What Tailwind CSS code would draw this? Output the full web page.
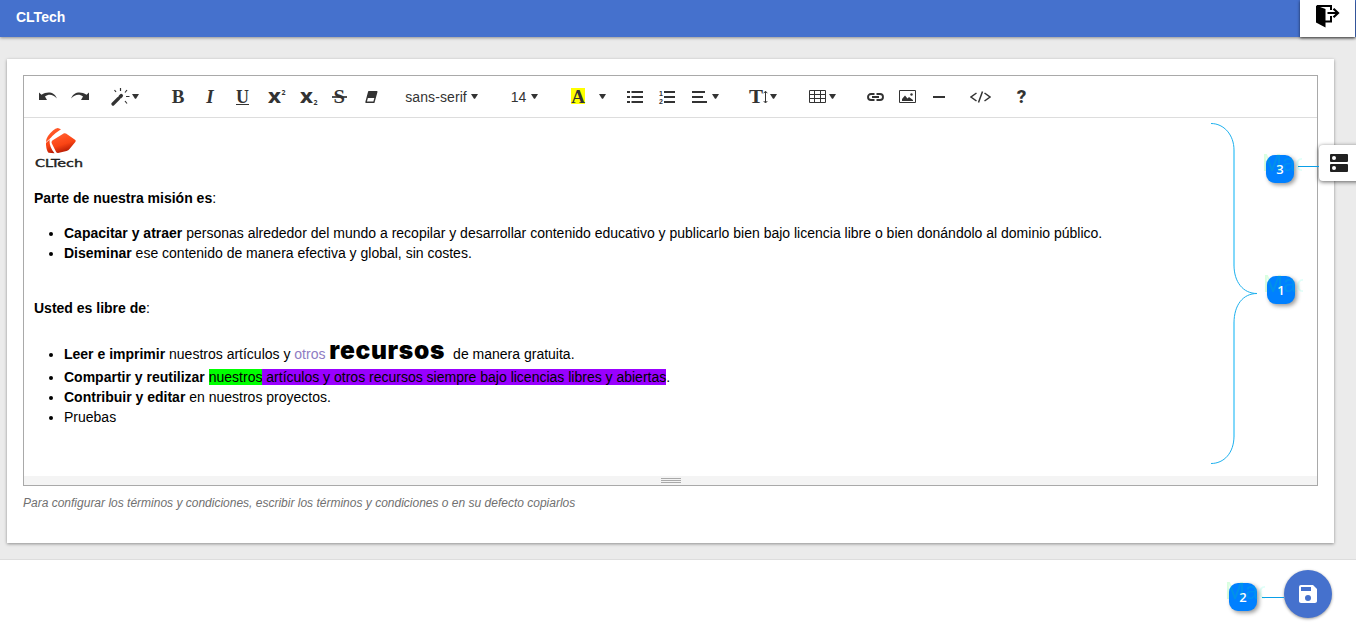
<!DOCTYPE html>
<html lang="es">
<head>
<meta charset="utf-8">
<title>CLTech</title>
<script src="https://cdn.jsdelivr.net/npm/@tailwindcss/browser@4"></script>
</head>
<body class="relative h-[640px] w-[1356px] overflow-hidden bg-[#ebebeb] font-['Liberation_Sans',Arial,sans-serif] text-sm leading-5 text-black">
<svg class="hidden"><symbol id="caret" viewBox="0 0 7 5"><path d="M0 0h7L4 4.7H3z" fill="#333"/></symbol></svg>

<header class="flex h-[37px] justify-between bg-[#4571cd] shadow-[0_1px_3px_rgba(0,0,0,.4)]">
  <h1 class="pl-4 pt-[7px] text-sm leading-5 font-bold text-white">CLTech</h1>
  <button class="mr-px flex h-[37px] w-[55px] justify-center bg-white pt-1 shadow-[0_1px_3px_rgba(0,0,0,.65)]" aria-label="Salir">
    <svg width="24" height="24" viewBox="0 0 24 24"><path d="M0 1.500 9.500 5v18.500L0 18.500z"/><path d="M1 2h14V6M15 12v5.500H9" fill="none" stroke="#000" stroke-width="2"/><path d="M11.500 9h10M17.500 4.700 22 9 17.500 13.300" fill="none" stroke="#000" stroke-width="2.200"/></svg>
  </button>
</header>

<main class="ml-[7px] mt-[22px] h-[484px] w-[1327px] bg-white px-4 pt-4 shadow-[0_1px_3px_rgba(0,0,0,.4)]">
  <section class="flex h-[411px] w-[1295px] flex-col border border-[#a9a9a9]">
    <div class="flex h-[42px] shrink-0 items-center border-b border-[#ddd] pl-[7px] text-[#333]">
      <div class="flex w-[33px] justify-center"><svg width="18" height="9" viewBox="0 0 18 9"><path d="M0 .5 2.500 2.800C8-1 15.500-.5 17.800 6.500 14 2 9.500 1.800 6 4.500L8 8H0z" fill="#333"/></svg></div>
      <div class="flex w-8 justify-center"><svg width="18" height="9" viewBox="0 0 18 9"><path d="M18 .5 15.500 2.800C10-1 2.500-.5 .2 6.500 4 2 8.500 1.800 12 4.500L10 8h8z" fill="#333"/></svg></div>
      <div class="flex w-[58px] items-center justify-center gap-[2px]"><svg width="19" height="18" viewBox="0 0 19 18"><path d="M2 16 7.500 10.500" stroke="#333" stroke-width="3.200" stroke-linecap="round"/><path d="M9.200 8.700l1-1" stroke="#333" stroke-width="3.600" stroke-linecap="round"/><path d="M9.500 0V3M3.500 2 5 4M16 2 14 4.500M15 8.500h3.500M14 13l2 2.500" stroke="#333" stroke-width="1.200"/></svg><svg class="h-[5px] w-[7px]"><use href="#caret"/></svg></div>
      <div class="ml-2 flex w-8 justify-center font-['Liberation_Serif',serif] text-[19px] font-bold">B</div>
      <div class="flex w-8 justify-center font-['Liberation_Serif',serif] text-[19px] font-bold italic">I</div>
      <div class="flex w-[33px] justify-center"><span class="mt-px h-[15px] border-b border-[#333] font-['Liberation_Serif',serif] text-[18px] leading-[14px] font-bold">U</span></div>
      <div class="ml-[2px] flex w-8 justify-center"><svg class="overflow-visible" width="18" height="17" viewBox="0 0 18 17"><text x="0" y="15" font-family="Open Sans, sans-serif" font-size="16.500" font-weight="800" textLength="13" lengthAdjust="spacingAndGlyphs" fill="#333">X</text><text x="13.500" y="7" font-family="Noto Sans, sans-serif" font-size="7" font-weight="700" fill="#333">2</text></svg></div>
      <div class="flex w-8 justify-center"><svg class="overflow-visible" width="18" height="17" viewBox="0 0 18 17"><text x="0" y="15" font-family="Open Sans, sans-serif" font-size="16.500" font-weight="800" textLength="13" lengthAdjust="spacingAndGlyphs" fill="#333">X</text><text x="13.500" y="17" font-family="Noto Sans, sans-serif" font-size="7" font-weight="700" fill="#333">2</text></svg></div>
      <div class="-ml-px flex w-[31px] justify-center"><svg class="overflow-visible" width="15" height="17" viewBox="0 0 15 17"><text x="1.500" y="15" font-family="Liberation Serif, serif" font-size="19" font-weight="700" textLength="11.500" lengthAdjust="spacingAndGlyphs" fill="#333">S</text><path d="M0 9h15" stroke="#333" stroke-width="1.700"/></svg></div>
      <div class="flex w-8 justify-center"><svg width="13" height="12" viewBox="0 0 13 12"><path d="M3.800.8h8L8.900 11.200H1z" fill="#fff" stroke="#333" stroke-width="1.400" stroke-linejoin="round"/><path d="M3.800.8h8L10.200 7H2.200z" fill="#333"/></svg></div>
      <div class="ml-[10px] flex w-[89px] items-center justify-center gap-[4px] tracking-[.1px]"><span>sans-serif</span><svg class="h-[5px] w-[7px]"><use href="#caret"/></svg></div>
      <div class="ml-[17px] flex w-[43px] items-center justify-center gap-[5px]"><span>14</span><svg class="h-[5px] w-[7px]"><use href="#caret"/></svg></div>
      <div class="ml-4 flex w-8 justify-center"><span class="-mt-px h-4 w-[14px] bg-[#ff0] text-center font-['Liberation_Serif',serif] text-[19px] leading-[18px] font-bold">A</span></div>
      <div class="flex w-[17px] justify-center"><svg class="h-[5px] w-[7px]"><use href="#caret"/></svg></div>
      <div class="ml-2 flex w-8 justify-center"><svg width="16" height="12" viewBox="0 0 16 12"><path d="M0 1h3M0 6h3M0 11h3M4.500 1H16M4.500 6H16M4.500 11H16" stroke="#333" stroke-width="2"/></svg></div>
      <div class="flex w-8 justify-center"><svg class="overflow-visible" width="16" height="12" viewBox="0 0 16 12"><path d="M5 1h11M5 6h11M5 11h11" stroke="#333" stroke-width="2"/><text x="0" y="5" font-family="Liberation Sans, sans-serif" font-size="7" font-weight="700" fill="#333">1</text><text x="0" y="12.500" font-family="Liberation Sans, sans-serif" font-size="7" font-weight="700" fill="#333">2</text></svg></div>
      <div class="flex w-11 items-center justify-center gap-[5px]"><svg width="15" height="12" viewBox="0 0 15 12"><path d="M0 1h13M0 6h11M0 11h15" stroke="#333" stroke-width="2"/></svg><svg class="h-[5px] w-[7px]"><use href="#caret"/></svg></div>
      <div class="ml-[14px] flex w-11 items-center justify-center gap-[2px]"><svg class="overflow-visible" width="19" height="14" viewBox="0 0 19 14"><text x="0" y="13" font-family="Liberation Serif, serif" font-size="18.500" font-weight="700" fill="#333" textLength="14" lengthAdjust="spacingAndGlyphs">T</text><path d="M16.500 1.500v11M14.700 3.200l1.800-2 1.800 2M14.700 11l1.800 2 1.800-2" fill="none" stroke="#333" stroke-width="1"/></svg><svg class="h-[5px] w-[7px]"><use href="#caret"/></svg></div>
      <div class="ml-[15px] flex w-11 items-center justify-center gap-[3px]"><svg width="17" height="13" viewBox="0 0 17 13"><path d="M.5.5h16v12H.5zM0 4.500h17M0 8.500h17M5.500 0v13M11.500 0v13" fill="none" stroke="#333"/></svg><svg class="h-[5px] w-[7px]"><use href="#caret"/></svg></div>
      <div class="ml-[15px] flex w-8 justify-center"><svg width="17" height="8" viewBox="0 0 17 8"><path d="M7.500 1H4a3 3 0 0 0 0 6h3.500M9.500 1h3.500a3 3 0 0 1 0 6H9.500M5 4h7" fill="none" stroke="#333" stroke-width="1.900"/></svg></div>
      <div class="flex w-8 justify-center"><svg width="17" height="13" viewBox="0 0 17 13"><path d="M.5.500h16v12H.5z" fill="none" stroke="#333"/><path d="M3 11V9l3-3.500 2.500 3L10 7l4 3v1z" fill="#333"/><circle cx="12.500" cy="4.500" r="1.200" fill="#333"/></svg></div>
      <div class="flex w-[31px] justify-center"><span class="h-[2px] w-3 bg-[#333]"></span></div>
      <div class="ml-[10px] flex w-8 justify-center"><svg width="21" height="12" viewBox="0 0 21 12"><path d="M6.500 2 1 6l5.500 4M14.500 2 20 6l-5.500 4M12.500.5 8.500 11.500" fill="none" stroke="#333" stroke-width="1.500"/></svg></div>
      <div class="ml-[10px] flex w-[31px] justify-center font-['Roboto',sans-serif] text-[19px] font-extrabold">?</div>
    </div>
    <article class="h-[358px] shrink-0 px-[10px] pt-2">
      <svg width="50" height="42" viewBox="0 0 50 42">
        <defs><linearGradient id="red" x1="0" y1="0" x2=".4" y2="1"><stop stop-color="#ff6a3c"/><stop offset=".4" stop-color="#ff5020"/><stop offset=".65" stop-color="#f94414"/><stop offset="1" stop-color="#b81c04"/></linearGradient></defs>
        <path d="M27 3.200 23.800 2Q21.500 2 19 4.500 12.500 10 12 15.500V19Q12.500 24.500 14.500 26.700L20.500 27.200Q15.500 21.500 15.500 14.500 16 10.500 27 3.200z" fill="url(#red)"/>
        <path d="M12 16.500 17 12" stroke="#fff" stroke-width=".8"/>
        <path d="M30 7.200Q31 7 32 7.500L41 13.700Q42.500 14.500 41.300 15.900L35.500 23Q34.500 24.500 32.500 25L24 27Q22.500 27 22 25.800L17.600 17Q17.200 15.500 18.300 14.500z" fill="url(#red)"/>
        <text x="1" y="40.500" font-family="DejaVu Sans, sans-serif" font-size="10.500" fill="#222" stroke="#222" stroke-width=".4" textLength="48" lengthAdjust="spacingAndGlyphs">CLTech</text>
      </svg>
      <p class="mt-5"><b>Parte de nuestra misión es</b>:</p>
      <ul class="mt-[15px] list-disc pl-[30px]">
        <li><b>Capacitar y atraer</b> personas alrededor del mundo a recopilar y desarrollar contenido educativo y publicarlo bien bajo licencia libre o bien donándolo al dominio público.</li>
        <li><b>Diseminar</b> ese contenido de manera efectiva y global, sin costes.</li>
      </ul>
      <p class="mt-[35px]"><b>Usted es libre de</b>:</p>
      <ul class="mt-[17px] list-disc pl-[30px]">
        <li class="h-8 leading-[34px]"><b>Leer e imprimir</b> nuestros artículos y <span class="text-[#8e7cc3]">otros</span> <span class="inline-block w-[116px] font-['Inter',sans-serif] text-[24.500px] leading-[30px] font-black tracking-[.7px]">recursos</span>&nbsp; de manera gratuita.</li>
        <li><b>Compartir y reutilizar</b> <span class="bg-[#0f0]">nuestros</span><span class="bg-[#90f]"> artículos y otros recursos siempre bajo licencias libres y abiertas</span>.</li>
        <li><b>Contribuir y editar</b> en nuestros proyectos.</li>
        <li>Pruebas</li>
      </ul>
    </article>
    <div class="flex flex-1 flex-col items-center gap-px bg-[#f4f4f4] pt-[2px]">
      <i class="h-px w-5 bg-[#a9a9a9]"></i><i class="h-px w-5 bg-[#a9a9a9]"></i><i class="h-px w-5 bg-[#a9a9a9]"></i>
    </div>
  </section>
  <p class="mt-[7px] text-xs leading-5 text-[#707070] italic">Para configurar los términos y condiciones, escribir los términos y condiciones o en su defecto copiarlos</p>
</main>

<footer class="mt-4 flex h-[81px] justify-end border-t border-[#ddd] bg-white pr-6 pt-[10px]">
  <button class="flex size-12 items-center justify-center rounded-full bg-[#4571cd] shadow-[0_1px_3px_rgba(0,0,0,.4)]" aria-label="Guardar"><svg width="24" height="24" viewBox="0 0 24 24" fill="#fff"><path d="M17 3H5a2 2 0 0 0-2 2v14c0 1.100.9 2 2 2h14c1.100 0 2-.9 2-2V7l-4-4zm-5 16a3 3 0 1 1 0-6 3 3 0 0 1 0 6zm3-10H5V5h10v4z"/></svg></button>
</footer>

<svg class="absolute left-[1210px] top-[122px]" width="50" height="344" viewBox="0 0 50 344" fill="none" stroke="#1cb0ee"><path d="M1 1.500C14 1.500 24 13 24 28M24 143C24 160 33 171.500 47 171.500 33 171.500 24 183 24 201M24 314C24 331 14 341.500 1 341.500"/><path d="M24 28V144M24 200V315" stroke="#82d8fa" stroke-width="2"/></svg>

<div class="absolute left-[1319px] top-[145px] flex h-9 w-[45px] items-center rounded bg-white pl-[11px] shadow-[0_1px_4px_rgba(0,0,0,.6)]"><svg width="18" height="18" viewBox="0 0 18 18"><rect width="18" height="8" rx="1" fill="#212121"/><rect y="10" width="18" height="8" rx="1" fill="#212121"/><circle cx="4" cy="4" r="2" fill="#fff"/><circle cx="4" cy="14" r="2" fill="#fff"/></svg></div>
<i class="absolute left-[1298px] top-[166px] h-px w-[21px] bg-[#0a9fe8]"></i>
<i class="absolute left-[1262px] top-[597px] h-px w-[22px] bg-[#0a9fe8]"></i>

<div class="absolute left-[1266px] top-[155px] flex size-7 items-center justify-center rounded-[9px] bg-[#0080ff] font-['Open_Sans',sans-serif] text-[13px] font-semibold text-white shadow-[2px_2px_4px_rgba(0,0,0,.4)]">3</div>
<div class="absolute left-[1267px] top-[276px] flex size-7 items-center justify-center rounded-[9px] bg-[#0080ff] font-['Open_Sans',sans-serif] text-[13px] font-semibold text-white shadow-[2px_2px_4px_rgba(0,0,0,.4)]">1</div>
<div class="absolute left-[1229px] top-[583px] flex size-7 items-center justify-center rounded-[9px] bg-[#0080ff] font-['Open_Sans',sans-serif] text-[13px] font-semibold text-white shadow-[2px_2px_4px_rgba(0,0,0,.4)]">2</div>
<span class="absolute left-[1262px] top-[151px] w-10 overflow-hidden bg-linear-to-r from-[#00ff00]/15 to-[#00ffd0]/12 bg-clip-text text-[24px] leading-6 text-transparent">Mac</span>
<span class="absolute left-[1263px] top-[272px] w-10 overflow-hidden bg-linear-to-r from-[#00ff00]/15 to-[#00ffd0]/12 bg-clip-text text-[24px] leading-6 text-transparent">Mac</span>
<span class="absolute left-[1225px] top-[579px] w-10 overflow-hidden bg-linear-to-r from-[#00ff00]/15 to-[#00ffd0]/12 bg-clip-text text-[24px] leading-6 text-transparent">Mac</span>
</body>
</html>
